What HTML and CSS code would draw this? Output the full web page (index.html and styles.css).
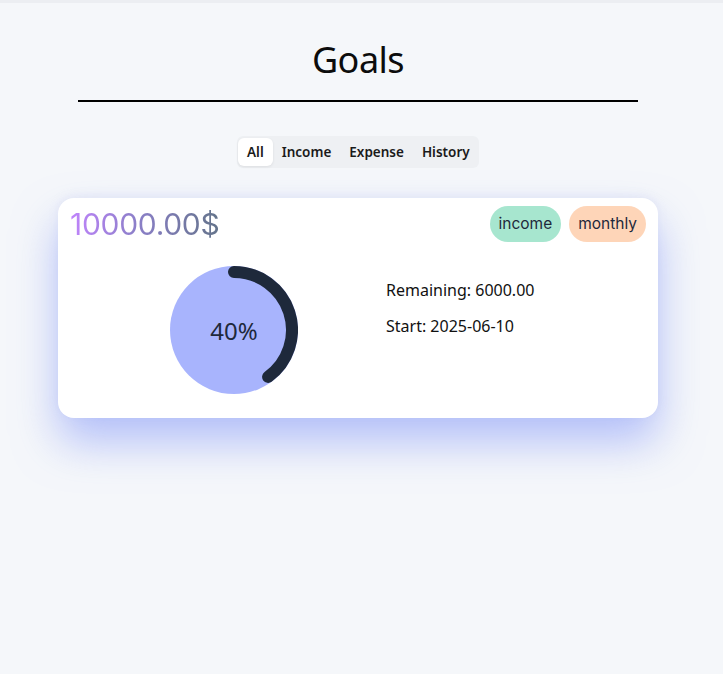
FILE: index.html
```html
<!DOCTYPE html>
<html>
<head>
<meta charset="utf-8">
<link rel="stylesheet" href="styles.css">
</head>
<body>
<div class="topbar"></div>
<main class="page">
  <h1 class="title">Goals</h1>
  <hr class="rule">
  <nav class="tabs">
    <button class="tab active">All</button>
    <button class="tab">Income</button>
    <button class="tab">Expense</button>
    <button class="tab">History</button>
  </nav>
  <section class="card">
    <div class="card-head">
      <div class="amount">10000.00$</div>
      <div class="badges">
        <span class="badge income">income</span>
        <span class="badge monthly">monthly</span>
      </div>
    </div>
    <div class="card-body">
      <div class="ring">
        <svg width="128" height="128" viewBox="0 0 128 128">
          <circle cx="64" cy="64" r="64" fill="#a8b4fd"/>
          <path d="M64 6 A58 58 0 0 1 98.09 110.92" fill="none" stroke="#1e293b" stroke-width="12" stroke-linecap="round"/>
        </svg>
        <span class="ring-label">40%</span>
      </div>
      <div class="info">
        <p>Remaining: 6000.00</p>
        <p>Start: 2025-06-10</p>
      </div>
    </div>
  </section>
</main>
</body>
</html>
```
FILE: styles.css
```css
* { box-sizing: border-box; }
html, body { margin: 0; padding: 0; }
body {
  background: #f5f7fa;
  font-family: "Noto Sans", "Open Sans", sans-serif;
  color: #111;
  min-height: 674px;
}
.topbar {
  height: 3px;
  background: #eceef2;
}
.page {
  display: flex;
  flex-direction: column;
  align-items: center;
  padding-right: 7px;
}
.title {
  margin: 35px 0 0;
  font-size: 36px;
  font-weight: 400;
  line-height: 44px;
  letter-spacing: -0.5px;
  color: #0c0c0c;
}
.rule {
  width: 560px;
  margin: 18px 0 0;
  border: none;
  border-top: 2px solid #000;
}
.tabs {
  margin-top: 34px;
  display: flex;
  background: #eef0f3;
  border-radius: 6px;
  padding: 2px 0 2px 1px;
  width: 242px;
}
.tab {
  font-family: "Noto Sans", sans-serif;
  font-weight: 600;
  font-size: 13.5px;
  border: none;
  background: transparent;
  color: #1a1a1a;
  padding: 0 9px;
  height: 28px;
  border-radius: 6px;
  cursor: pointer;
}
.tab.active {
  background: #fff;
  box-shadow: 0 1px 3px rgba(0,0,0,0.08);
}
.card {
  margin-top: 30px;
  width: 600px;
  height: 220px;
  background: #fff;
  border-radius: 16px;
  box-shadow: 0 24px 44px rgba(125,145,248,0.55), 0 -2px 8px rgba(200,205,240,0.25);
  padding: 8px 12px 24px 12px;
}
.card-head {
  display: flex;
  justify-content: space-between;
  align-items: center;
  height: 36px;
}
.amount {
  font-family: "Inter", sans-serif;
  font-size: 30px;
  font-weight: 400;
  letter-spacing: -0.3px;
  background: linear-gradient(90deg, #c084fc 0%, #8b7fc8 45%, #64748b 100%);
  -webkit-background-clip: text;
  background-clip: text;
  color: transparent;
  line-height: 36px;
}
.badges {
  display: flex;
  gap: 8px;
}
.badge {
  height: 36px;
  line-height: 36px;
  border-radius: 18px;
  padding: 0 9px;
  font-family: "Inter", sans-serif;
  font-size: 15.5px;
  color: #1e293b;
}
.badge.income { background: #a7e6cf; }
.badge.monthly { background: #fed5b8; }
.card-body {
  display: flex;
  align-items: flex-start;
  margin-top: 24px;
  padding-left: 100px;
  gap: 88px;
}
.ring {
  position: relative;
  width: 128px;
  height: 128px;
}
.ring svg { display: block; }
.ring-label {
  position: absolute;
  inset: 0;
  display: flex;
  align-items: center;
  justify-content: center;
  font-family: "Noto Sans", sans-serif;
  font-size: 24px;
  color: #1e293b;
}
.info {
  margin-top: 12px;
  font-size: 16px;
  color: #111;
}
.info p {
  margin: 0 0 12px;
  line-height: 24px;
}
```
